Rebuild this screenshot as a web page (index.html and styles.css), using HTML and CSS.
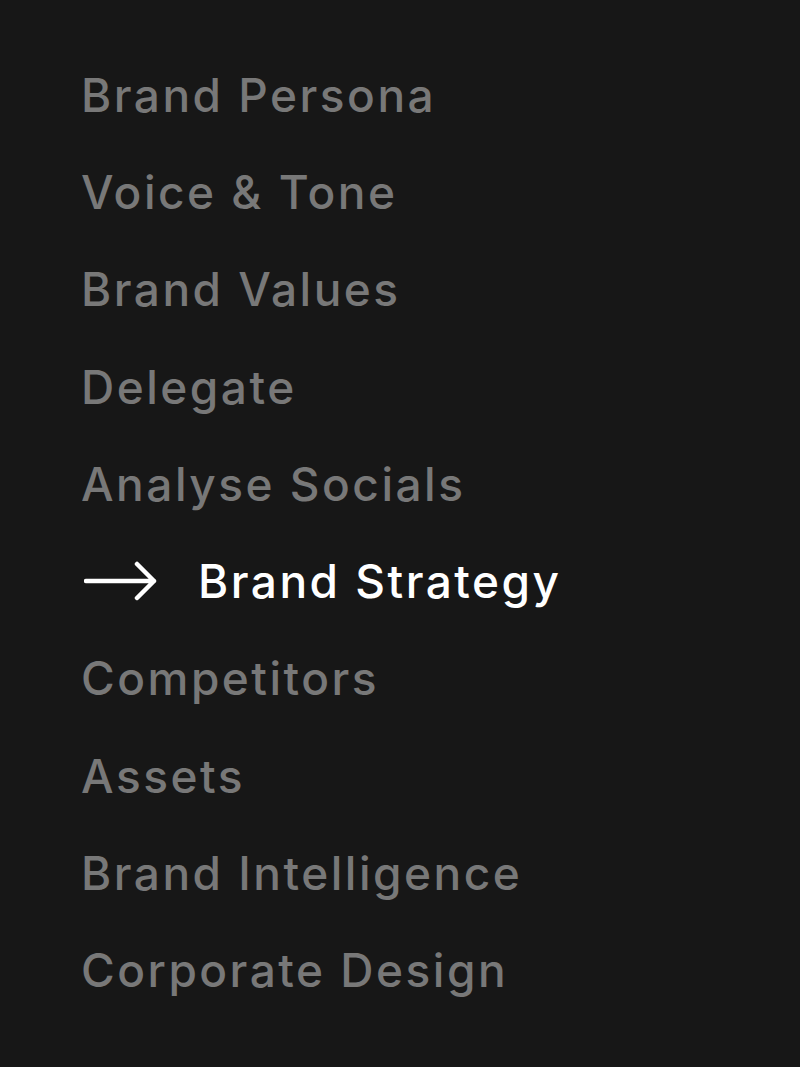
FILE: index.html
```html
<!DOCTYPE html>
<html>
<head>
<meta charset="utf-8">
<link rel="stylesheet" href="styles.css">
</head>
<body>
<nav class="menu">
  <a class="item">Brand Persona</a>
  <a class="item">Voice &amp; Tone</a>
  <a class="item">Brand Values</a>
  <a class="item">Delegate</a>
  <a class="item">Analyse Socials</a>
  <a class="item active"><svg class="arrow" width="74" height="40" viewBox="0 0 74 40"><path d="M2 20H70M53 3L70 20L53 37" fill="none" stroke="#fff" stroke-width="4.5" stroke-linecap="round" stroke-linejoin="round"/></svg><span>Brand Strategy</span></a>
  <a class="item">Competitors</a>
  <a class="item">Assets</a>
  <a class="item">Brand Intelligence</a>
  <a class="item">Corporate Design</a>
</nav>
</body>
</html>
```
FILE: styles.css
```css
html, body {
  margin: 0;
  padding: 0;
  background: #171717;
  height: 100%;
}
.menu {
  display: flex;
  flex-direction: column;
  padding: 46px 0 0 81px;
}
.item {
  display: flex;
  align-items: center;
  height: 97.3px;
  font-family: "Inter", sans-serif;
  font-weight: 450;
  font-size: 46px;
  letter-spacing: 2.5px;
  color: #787878;
  white-space: nowrap;
}
.item.active {
  color: #ffffff;
}
.arrow {
  margin-left: 3px;
  margin-right: 40px;
}
```
